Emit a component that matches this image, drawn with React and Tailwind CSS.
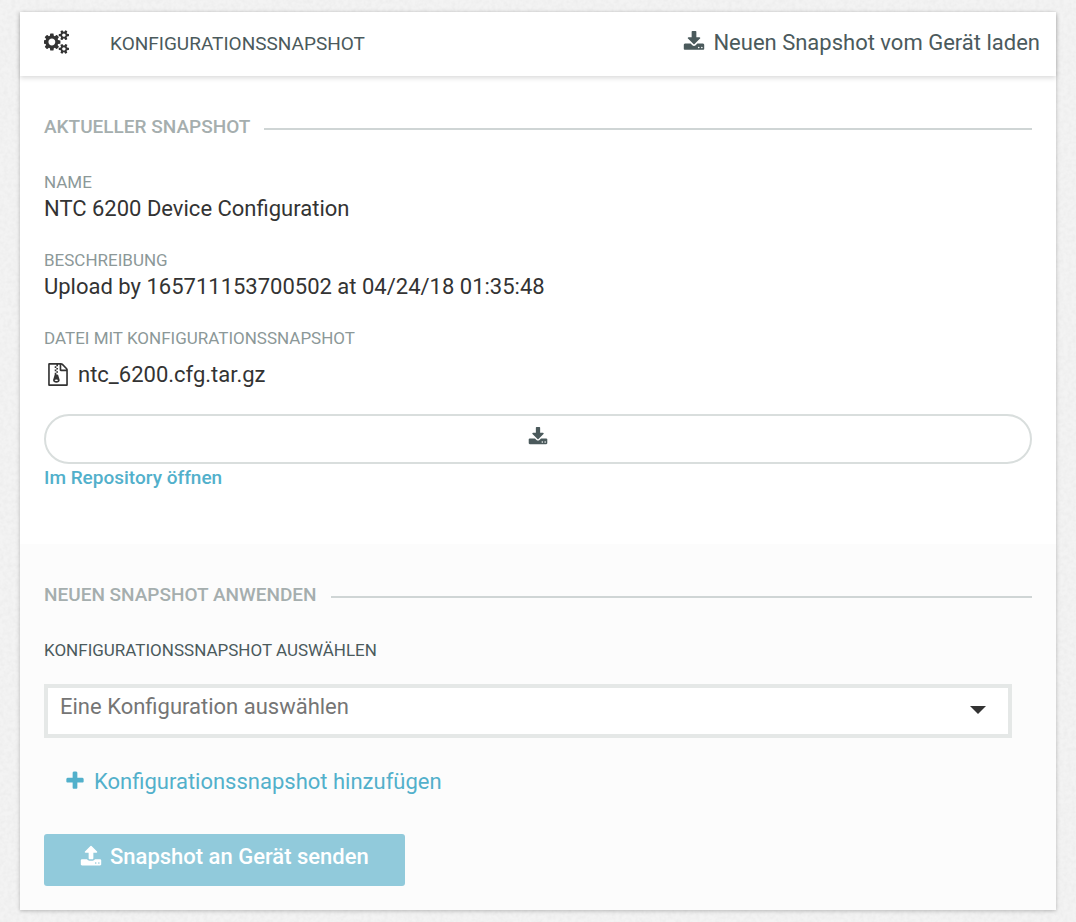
import React from 'react';

const PATHS = {
  download:
    'M1344 1344q0-26-19-45t-45-19-45 19-19 45 19 45 45 19 45-19 19-45zm256 0q0-26-19-45t-45-19-45 19-19 45 19 45 45 19 45-19 19-45zm128-224v320q0 40-28 68t-68 28h-1472q-40 0-68-28t-28-68v-320q0-40 28-68t68-28h465l135 136q58 56 136 56t136-56l136-136h464q40 0 68 28t28 68zm-325-569q17 41-14 70l-448 448q-18 19-45 19t-45-19l-448-448q-31-29-14-70 17-39 59-39h256v-448q0-26 19-45t45-19h256q26 0 45 19t19 45v448h256q42 0 59 39z',
  upload:
    'M1344 1472q0-26-19-45t-45-19-45 19-19 45 19 45 45 19 45-19 19-45zm256 0q0-26-19-45t-45-19-45 19-19 45 19 45 45 19 45-19 19-45zm128-224v320q0 40-28 68t-68 28h-1472q-40 0-68-28t-28-68v-320q0-40 28-68t68-28h427q21 56 70.5 92t110.5 36h256q61 0 110.5-36t70.5-92h427q40 0 68 28t28 68zm-325-648q-17 40-59 40h-256v448q0 26-19 45t-45 19h-256q-26 0-45-19t-19-45v-448h-256q-42 0-59-40-17-39 14-69l448-448q18-19 45-19t45 19l448 448q31 30 14 69z',
  plus:
    'M1600 736v192q0 40-28 68t-68 28h-416v416q0 40-28 68t-68 28h-192q-40 0-68-28t-28-68v-416h-416q-40 0-68-28t-28-68v-192q0-40 28-68t68-28h416v-416q0-40 28-68t68-28h192q40 0 68 28t28 68v416h416q40 0 68 28t28 68z',
  archive:
    'M768 384v-128h-128v128h128zm128 128v-128h-128v128h128zm-128 128v-128h-128v128h128zm128 128v-128h-128v128h128zm700-388q28 28 48 76t20 88v1152q0 40-28 68t-68 28h-1344q-40 0-68-28t-28-68v-1600q0-40 28-68t68-28h896q40 0 88 20t76 48zm-444-244v376h376q-10-29-22-41l-313-313q-12-12-41-22zm384 1528v-1024h-416q-40 0-68-28t-28-68v-416h-128v128h-128v-128h-512v1536h1280zm-627-721l107 349q8 27 8 52 0 83-72.5 137.5t-183.5 54.5-183.5-54.5-72.5-137.5q0-25 8-52 21-63 120-396v-128h128v128h79q22 0 39 13t23 34zm-141 465q53 0 90.5-19t37.5-45-37.5-45-90.5-19-90.5 19-37.5 45 37.5 45 90.5 19z',
  cogs:
    'M832 896q0-106-75-181t-181-75-181 75-75 181 75 181 181 75 181-75 75-181zm768 512q0-52-38-90t-90-38-90 38-38 90q0 53 37.5 90.5t90.5 37.5 90.5-37.5 37.5-90.5zm0-1024q0-52-38-90t-90-38-90 38-38 90q0 53 37.5 90.5t90.5 37.5 90.5-37.5 37.5-90.5zm-384 421v185q0 10-7 19.5t-16 10.5l-155 24q-11 35-32 76 34 48 90 115 7 11 7 20 0 12-7 19-23 30-82.5 89.5t-78.5 59.5q-11 0-21-7l-115-90q-37 19-77 31-11 108-23 155-7 24-30 24h-186q-11 0-20-7.5t-10-17.5l-23-153q-34-10-75-31l-118 89q-7 7-20 7-11 0-21-8-144-133-144-160 0-9 7-19 10-14 41-53t47-61q-23-44-35-82l-152-24q-10-1-17-9.5t-7-19.5v-185q0-10 7-19.5t16-10.5l155-24q11-35 32-76-34-48-90-115-7-11-7-20 0-12 7-20 22-30 82-89t79-59q11 0 21 7l115 90q34-18 77-32 11-108 23-154 7-24 30-24h186q11 0 20 7.5t10 17.5l23 153q34 10 75 31l118-89q8-7 20-7 11 0 21 8 144 133 144 160 0 8-7 19-12 16-42 54t-45 60q23 48 34 82l152 23q10 2 17 10.5t7 19.5zm640 533v140q0 16-149 31-12 27-30 52 51 113 51 138 0 4-4 7-122 71-124 71-8 0-46-47t-52-68q-20 2-30 2t-30-2q-14 21-52 68t-46 47q-2 0-124-71-4-3-4-7 0-25 51-138-18-25-30-52-149-15-149-31v-140q0-16 149-31 13-29 30-52-51-113-51-138 0-4 4-7 4-2 35-20t59-34 30-16q8 0 46 46.5t52 67.5q20-2 30-2t30 2q51-71 92-112l6-2q4 0 124 70 4 3 4 7 0 25-51 138 17 23 30 52 149 15 149 31zm0-1024v140q0 16-149 31-12 27-30 52 51 113 51 138 0 4-4 7-122 71-124 71-8 0-46-47t-52-68q-20 2-30 2t-30-2q-14 21-52 68t-46 47q-2 0-124-71-4-3-4-7 0-25 51-138-18-25-30-52-149-15-149-31v-140q0-16 149-31 13-29 30-52-51-113-51-138 0-4 4-7 4-2 35-20t59-34 30-16q8 0 46 46.5t52 67.5q20-2 30-2t30 2q51-71 92-112l6-2q4 0 124 70 4 3 4 7 0 25-51 138 17 23 30 52 149 15 149 31z',
};

function Icon({ name, className, viewBox = '0 0 1792 1792' }) {
  return (
    <svg viewBox={viewBox} fill="currentColor" aria-hidden="true" className={`shrink-0 ${className}`}>
      <path d={PATHS[name]} />
    </svg>
  );
}

function PaperTexture() {
  return (
    <svg className="absolute inset-0 -z-10 h-full w-full opacity-[0.02]" aria-hidden="true">
      <filter id="paper">
        <feTurbulence type="fractalNoise" baseFrequency="0.25" numOctaves="2" seed="4" />
        <feColorMatrix type="matrix" values="0 0 0 0 0  0 0 0 0 0  0 0 0 0 0  2 0 0 0 -0.6" />
      </filter>
      <rect width="100%" height="100%" filter="url(#paper)" />
    </svg>
  );
}

function SectionTitle({ children }) {
  return (
    <div className="flex items-center gap-3.5">
      <h2 className="text-[19px] leading-6 font-medium text-[#a5aeae] uppercase">{children}</h2>
      <span className="mt-1 h-0.5 flex-1 bg-[#cfd5d5]" />
    </div>
  );
}

function Field({ label, children }) {
  return (
    <div>
      <dt className="pb-px text-[17px] leading-5 text-[#8c9898] uppercase">{label}</dt>
      <dd className="text-[22px] leading-8 text-[#333333]">{children}</dd>
    </div>
  );
}

export default function App() {
  return (
    <div className="relative isolate min-h-screen bg-[#f3f3f3] px-5 py-3 font-['Roboto',sans-serif]">
      <PaperTexture />
      <main className="bg-white shadow-[0_1px_4px_rgba(0,0,0,0.25)]">
        <header className="flex h-16 items-center pr-4 pl-6 shadow-[0_2px_5px_rgba(0,0,0,0.15)]">
          <Icon name="cogs" viewBox="0 0 1920 1792" className="mb-1 h-6 w-[26px] text-[#333333]" />
          <h1 className="ml-10 text-[19px] leading-6 text-[#4b5a5c] uppercase">Konfigurationssnapshot</h1>
          <button type="button" className="mb-0.5 ml-auto flex items-center gap-2 text-[22px] leading-8 text-[#4b5a5c]">
            <Icon name="download" className="mb-0.5 size-[22px]" />
            Neuen Snapshot vom Gerät laden
          </button>
        </header>

        <section className="px-6 pt-[39px] pb-[52px]">
          <SectionTitle>Aktueller Snapshot</SectionTitle>
          <dl className="mt-[33px] flex flex-col gap-[25px]">
            <Field label="Name">NTC 6200 Device Configuration</Field>
            <Field label="Beschreibung">Upload by 165711153700502 at 04/24/18 01:35:48</Field>
            <Field label="Datei mit Konfigurationssnapshot">
              <span className="mt-2.5 flex items-center gap-2.5 pl-1">
                <Icon name="archive" viewBox="128 0 1536 1792" className="mb-0.5 h-[23px] w-5" />
                ntc_6200.cfg.tar.gz
              </span>
            </Field>
          </dl>
          <button
            type="button"
            aria-label="Herunterladen"
            className="mt-[23px] flex h-[50px] w-full items-center justify-center rounded-full border-2 border-[#d9dedd] pb-1 text-[#4b5a5c]"
          >
            <Icon name="download" className="size-5" />
          </button>
          <a href="#repository" className="block w-fit text-[19px] leading-7 font-medium text-[#52b0cb]">
            Im Repository öffnen
          </a>
        </section>

        <section className="bg-[#fcfcfc] px-6 pt-[39px] pb-6">
          <SectionTitle>Neuen Snapshot anwenden</SectionTitle>
          <label htmlFor="snapshot" className="mt-[33px] block text-[17px] leading-5 text-[#4b5a5c] uppercase">
            Konfigurationssnapshot auswählen
          </label>
          <div className="relative mt-6 mr-5">
            <select
              id="snapshot"
              defaultValue=""
              className="block h-[54px] w-full appearance-none border-4 border-[#e5e8e7] bg-white pr-12 pb-2.5 pl-3 text-[22px] text-[#757575]"
            >
              <option value="">Eine Konfiguration auswählen</option>
            </select>
            <svg
              viewBox="0 0 16 8"
              aria-hidden="true"
              className="pointer-events-none absolute top-[22px] right-[26px] h-2 w-4 fill-[#333333]"
            >
              <path d="M0 0h16L8 8z" />
            </svg>
          </div>
          <button type="button" className="mt-7 ml-5 flex items-center gap-2 text-[22px] leading-8 text-[#52b0cb]">
            <Icon name="plus" className="mb-0.5 size-[22px]" />
            Konfigurationssnapshot hinzufügen
          </button>
          <button
            type="button"
            className="mt-9 flex h-[52px] items-center gap-2 rounded-[3px] bg-[#91cadb] px-9 pb-1.5 text-[22px] leading-8 font-medium text-white"
          >
            <Icon name="upload" className="mb-0.5 size-[22px]" />
            Snapshot an Gerät senden
          </button>
        </section>
      </main>
    </div>
  );
}
